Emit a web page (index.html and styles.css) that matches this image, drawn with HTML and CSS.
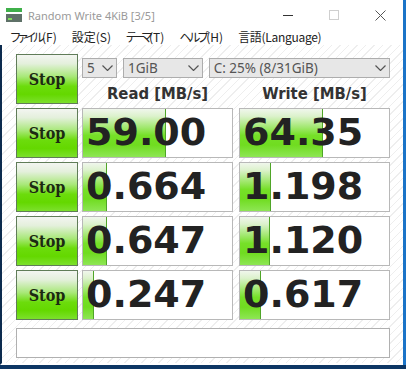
FILE: index.html
```html
<!DOCTYPE html>
<html lang="ja">
<head>
<meta charset="utf-8">
<title>Random Write 4KiB [3/5]</title>
<link rel="stylesheet" href="styles.css">
</head>
<body>
<div class="window">
  <div class="titlebar">
    <svg class="app-icon" width="16" height="14" viewBox="0 0 16 14">
      <rect x="0" y="0" width="16" height="4" fill="#3fb04a"/>
      <rect x="0" y="6" width="16" height="8" fill="#5f7168"/>
      <rect x="2" y="10" width="4" height="2" fill="#7fe05a"/>
    </svg>
    <div class="title">Random Write 4KiB [3/5]</div>
    <div class="ctrl"><svg width="10" height="10" viewBox="0 0 10 10"><line x1="0" y1="5.5" x2="10" y2="5.5" stroke="#333" stroke-width="1"/></svg></div>
    <div class="ctrl"><svg width="10" height="10" viewBox="0 0 10 10"><rect x="0.5" y="0.5" width="9" height="9" fill="none" stroke="#cfcfcf" stroke-width="1"/></svg></div>
    <div class="ctrl"><svg width="11" height="11" viewBox="0 0 11 11"><path d="M0.5 0.5 L10.5 10.5 M10.5 0.5 L0.5 10.5" stroke="#555" stroke-width="1" fill="none"/></svg></div>
  </div>
  <div class="menubar">
    <span class="menu-item"><span class="kana-tight">ファイル</span>(F)</span>
    <span class="menu-item">設定(S)</span>
    <span class="menu-item"><span class="kana-tighter">テーマ</span>(T)</span>
    <span class="menu-item"><span class="kana-mid">ヘルプ</span>(H)</span>
    <span class="menu-item lang">言語(Language)</span>
  </div>
  <div class="client">
    <div class="board">
      <div class="stop">Stop</div>
      <div class="controls">
        <div class="selects">
          <div class="combo count"><span>5</span><svg class="chev" width="11" height="6" viewBox="0 0 11 6"><path d="M0.5 0.5 L5.5 5.5 L10.5 0.5" fill="none" stroke="#555" stroke-width="1.2"/></svg></div>
          <div class="combo size"><span>1GiB</span><svg class="chev" width="11" height="6" viewBox="0 0 11 6"><path d="M0.5 0.5 L5.5 5.5 L10.5 0.5" fill="none" stroke="#555" stroke-width="1.2"/></svg></div>
          <div class="combo drive"><span>C: 25% (8/31GiB)</span><svg class="chev" width="11" height="6" viewBox="0 0 11 6"><path d="M0.5 0.5 L5.5 5.5 L10.5 0.5" fill="none" stroke="#555" stroke-width="1.2"/></svg></div>
        </div>
        <div class="heads">
          <div class="head">Read [MB/s]</div>
          <div class="head">Write [MB/s]</div>
        </div>
      </div>

      <div class="stop">Stop</div>
      <div class="result"><div class="bar" style="width:83px"></div><div class="value">59.00</div></div>
      <div class="result"><div class="bar" style="width:83px"></div><div class="value">64.35</div></div>

      <div class="stop">Stop</div>
      <div class="result"><div class="bar" style="width:24px"></div><div class="value">0.664</div></div>
      <div class="result"><div class="bar" style="width:31px"></div><div class="value">1.198</div></div>

      <div class="stop">Stop</div>
      <div class="result"><div class="bar" style="width:24px"></div><div class="value">0.647</div></div>
      <div class="result"><div class="bar" style="width:30px"></div><div class="value">1.120</div></div>

      <div class="stop">Stop</div>
      <div class="result"><div class="bar" style="width:11px"></div><div class="value">0.247</div></div>
      <div class="result"><div class="bar" style="width:21px"></div><div class="value">0.617</div></div>
    </div>
    <div class="comment"></div>
  </div>
</div>
</body>
</html>
```
FILE: styles.css
```css
* { box-sizing: border-box; }

html, body { margin: 0; padding: 0; }

body {
  width: 406px;
  height: 369px;
  overflow: hidden;
  background: linear-gradient(to bottom, #1b74c8 0, #1b74c8 365px, #0d3664 365px);
  font-family: "Noto Sans", "Noto Sans CJK JP", sans-serif;
}

.window {
  width: 403px;
  height: 365px;
  background: #fff;
  display: flex;
  flex-direction: column;
}

.titlebar {
  height: 30px;
  display: flex;
  align-items: center;
}

.app-icon {
  margin-left: 6px;
  flex: none;
}

.title {
  margin-left: 6px;
  flex: 1;
  font-size: 11px;
  color: #9a9a9a;
  white-space: nowrap;
}

.ctrl {
  width: 46px;
  height: 30px;
  display: flex;
  align-items: center;
  justify-content: center;
}

.menubar {
  height: 15px;
  display: flex;
  padding-left: 3px;
  font-family: "Noto Sans CJK JP", sans-serif;
  font-size: 12px;
  line-height: 13px;
  color: #222;
  font-feature-settings: "palt";
}

.menu-item {
  padding: 0 7.5px;
  white-space: nowrap;
}

.kana-tight { letter-spacing: -2.5px; }
.kana-tighter { letter-spacing: -3.5px; }
.kana-mid { letter-spacing: -2.5px; }
.lang { letter-spacing: -0.3px; }

.client {
  flex: 1;
  border-left: 2px solid #0c2b4e;
  border-bottom: 2px solid #fff;
  padding: 9px 0 5px 14px;
  background: repeating-linear-gradient(135deg, #ffffff 0 5px, #eeeeee 5px 6px);
}

.board {
  display: grid;
  grid-template-columns: 66px 157px 151px;
  grid-auto-rows: 50px;
  row-gap: 4px;
}

.stop {
  width: 62px;
  height: 50px;
  border: 1px solid #607c58;
  background: linear-gradient(to bottom, #f3f5f1 0%, #e4f0dc 18%, #a8e878 45%, #6cdc0c 65%, #64d800 82%, #7ce02c 100%);
  display: flex;
  align-items: center;
  justify-content: center;
  font-family: "DejaVu Serif Condensed", "DejaVu Serif", serif;
  font-stretch: condensed;
  font-weight: bold;
  font-size: 16px;
  color: #1c2a12;
}

.controls {
  grid-column: 2 / 4;
  display: flex;
  flex-direction: column;
}

.selects {
  display: flex;
  gap: 6px;
  margin-top: 4px;
  height: 20px;
}

.combo {
  height: 20px;
  border: 1px solid #adadad;
  background: #e7e7e7;
  display: flex;
  align-items: center;
  justify-content: space-between;
  padding: 0 3px 0 4px;
  font-size: 13.5px;
  color: #555;
  white-space: nowrap;
}

.combo.count { width: 35px; }
.combo.size { width: 80px; }
.combo.drive { width: 182px; }

.chev { flex: none; }

.heads {
  display: flex;
  gap: 6px;
  flex: 1;
  align-items: center;
}

.head {
  width: 151px;
  text-align: center;
  font-family: "DejaVu Sans Condensed", "DejaVu Sans", sans-serif;
  font-stretch: condensed;
  font-weight: bold;
  font-size: 16.5px;
  color: #333;
  padding-top: 4px;
}

.result {
  width: 151px;
  height: 50px;
  border: 1px solid #b8b8b8;
  background: #fff;
  position: relative;
  overflow: hidden;
}

.bar {
  position: absolute;
  left: 0;
  top: 0;
  bottom: 0;
  border-right: 1px solid #4fa528;
  background: linear-gradient(to bottom, #f0f6ec 0%, #dcf2cc 15%, #a2e870 38%, #76e028 55%, #70dc20 75%, #8ee654 100%);
}

.value {
  position: relative;
  padding-left: 3px;
  font-family: "DejaVu Sans", sans-serif;
  font-weight: bold;
  font-size: 38px;
  line-height: 46px;
  color: #222;
}

.comment {
  margin-top: 8px;
  width: 374px;
  height: 30px;
  border: 1px solid #b0b0b0;
  background: #fff;
}
```
